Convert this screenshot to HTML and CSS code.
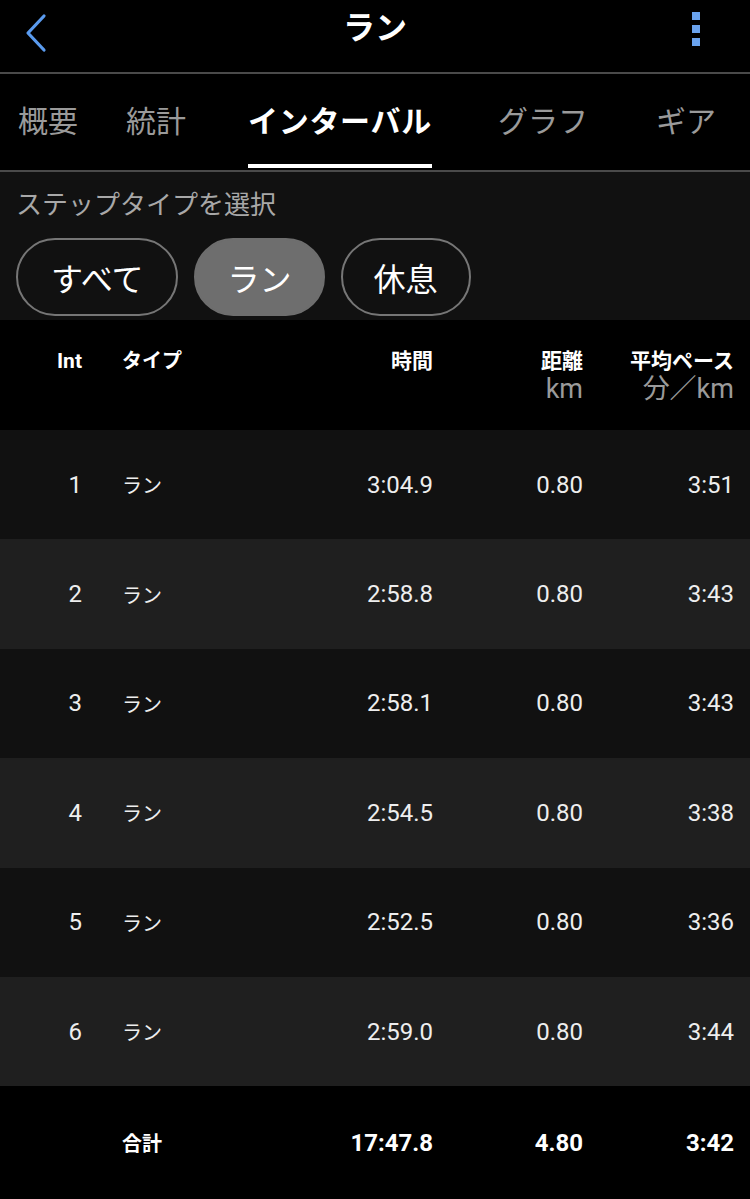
FILE: index.html
```html
<!DOCTYPE html>
<html lang="ja">
<head>
<meta charset="UTF-8">
<meta name="viewport" content="width=device-width, initial-scale=1.0">
<title>ラン - インターバル</title>
<link rel="stylesheet" href="styles.css">
</head>
<body>
    <header class="topbar">
        <svg class="back" width="24" height="40" viewBox="0 0 24 40">
            <polyline points="20,3 4,20 20,37" fill="none" stroke="#5a9bef" stroke-width="3.2" stroke-linecap="round" stroke-linejoin="round"/>
        </svg>
        <h1 class="title">ラン</h1>
        <div class="kebab"><span></span><span></span><span></span></div>
    </header>

    <nav class="tabs">
        <span class="tab">概要</span>
        <span class="tab">統計</span>
        <span class="tab active">インターバル</span>
        <span class="tab">グラフ</span>
        <span class="tab">ギア</span>
    </nav>

    <section class="filter">
        <div class="filter-label">ステップタイプを選択</div>
        <div class="pills">
            <button class="pill wide">すべて</button>
            <button class="pill selected">ラン</button>
            <button class="pill">休息</button>
        </div>
    </section>

    <div class="table">
        <div class="row head">
            <div class="c-int">Int</div>
            <div class="c-type">タイプ</div>
            <div class="c-num">時間</div>
            <div class="c-num">距離<span class="unit">km</span></div>
            <div class="c-num">平均ペース<span class="unit">分／km</span></div>
        </div>
        <div class="row">
            <div class="c-int">1</div><div class="c-type">ラン</div>
            <div class="c-num">3:04.9</div><div class="c-num">0.80</div><div class="c-num">3:51</div>
        </div>
        <div class="row">
            <div class="c-int">2</div><div class="c-type">ラン</div>
            <div class="c-num">2:58.8</div><div class="c-num">0.80</div><div class="c-num">3:43</div>
        </div>
        <div class="row">
            <div class="c-int">3</div><div class="c-type">ラン</div>
            <div class="c-num">2:58.1</div><div class="c-num">0.80</div><div class="c-num">3:43</div>
        </div>
        <div class="row">
            <div class="c-int">4</div><div class="c-type">ラン</div>
            <div class="c-num">2:54.5</div><div class="c-num">0.80</div><div class="c-num">3:38</div>
        </div>
        <div class="row">
            <div class="c-int">5</div><div class="c-type">ラン</div>
            <div class="c-num">2:52.5</div><div class="c-num">0.80</div><div class="c-num">3:36</div>
        </div>
        <div class="row">
            <div class="c-int">6</div><div class="c-type">ラン</div>
            <div class="c-num">2:59.0</div><div class="c-num">0.80</div><div class="c-num">3:44</div>
        </div>
        <div class="row total">
            <div class="c-int"></div><div class="c-type">合計</div>
            <div class="c-num">17:47.8</div><div class="c-num">4.80</div><div class="c-num">3:42</div>
        </div>
    </div>
</body>
</html>
```

FILE: styles.css
```css
body {
    margin: 0;
    background-color: #000;
    color: #fff;
    font-family: Roboto, "Noto Sans CJK JP", sans-serif;
}
.topbar {
    height: 72px;
    display: flex;
    align-items: center;
    justify-content: space-between;
    padding: 0 50px 0 24px;
    border-bottom: 2px solid #4a4a4a;
    position: relative;
}
.back {
    display: block;
    margin-top: -6px;
}
.title {
    position: absolute;
    left: 0;
    right: 0;
    top: 8px;
    margin: 0;
    text-align: center;
    font-size: 32px;
    font-weight: bold;
    line-height: 40px;
}
.kebab {
    display: flex;
    flex-direction: column;
    gap: 5px;
    margin-top: -14px;
}
.kebab span {
    display: block;
    width: 8px;
    height: 8px;
    background-color: #6aa3ee;
}
.tabs {
    height: 96px;
    display: flex;
    align-items: center;
    padding-left: 18px;
    border-bottom: 2px solid #4a4a4a;
}
.tab {
    position: relative;
    font-size: 30px;
    color: #9a9a9a;
    line-height: 40px;
    white-space: nowrap;
}
.tab:nth-child(2) { margin-left: 48px; }
.tab:nth-child(3) { margin-left: 62px; }
.tab:nth-child(4) { margin-left: 66px; }
.tab:nth-child(5) { margin-left: 68px; }
.tab.active {
    color: #fff;
    font-weight: bold;
    letter-spacing: 0.7px;
}
.tab.active::after {
    content: "";
    position: absolute;
    left: 0;
    right: 0;
    bottom: -26px;
    height: 4px;
    background-color: #fff;
}
.filter {
    background-color: #111;
    padding: 14px 16px 4px;
    height: 130px;
}
.filter-label {
    font-size: 26px;
    color: #a8a8a8;
    line-height: 38px;
}
.pills {
    display: flex;
    gap: 16px;
    margin-top: 14px;
}
.pill {
    height: 78px;
    padding: 0 31px;
    border: 2px solid #767676;
    border-radius: 40px;
    background: transparent;
    color: #fff;
    font-family: "Noto Sans CJK JP", sans-serif;
    font-size: 32px;
}
.pill.wide {
    padding: 0 33px;
}
.pill.selected {
    background-color: #6e6e6e;
    border-color: #6e6e6e;
}
.table {
    display: flex;
    flex-direction: column;
}
.row {
    display: grid;
    grid-template-columns: 82px 1fr 150px 150px 151px;
    align-items: center;
    height: 109.4px;
    padding-right: 16px;
    font-size: 24px;
    color: #eee;
}
.row:nth-child(even) { background-color: #111; }
.row:nth-child(odd) { background-color: #1f1f1f; }
.row .c-type {
    padding-left: 40px;
    font-size: 20px;
}
.c-int, .c-num {
    text-align: right;
}
.row.head {
    height: 110px;
    align-items: start;
    padding-top: 28px;
    box-sizing: border-box;
    background-color: #000;
    font-size: 21px;
    font-weight: bold;
    line-height: 26px;
    color: #fff;
}
.unit {
    display: block;
    font-size: 27px;
    font-weight: normal;
    line-height: 30px;
    color: #9a9a9a;
}
.row.total {
    height: 113px;
    background-color: #000;
    font-weight: bold;
    color: #fff;
}
```
